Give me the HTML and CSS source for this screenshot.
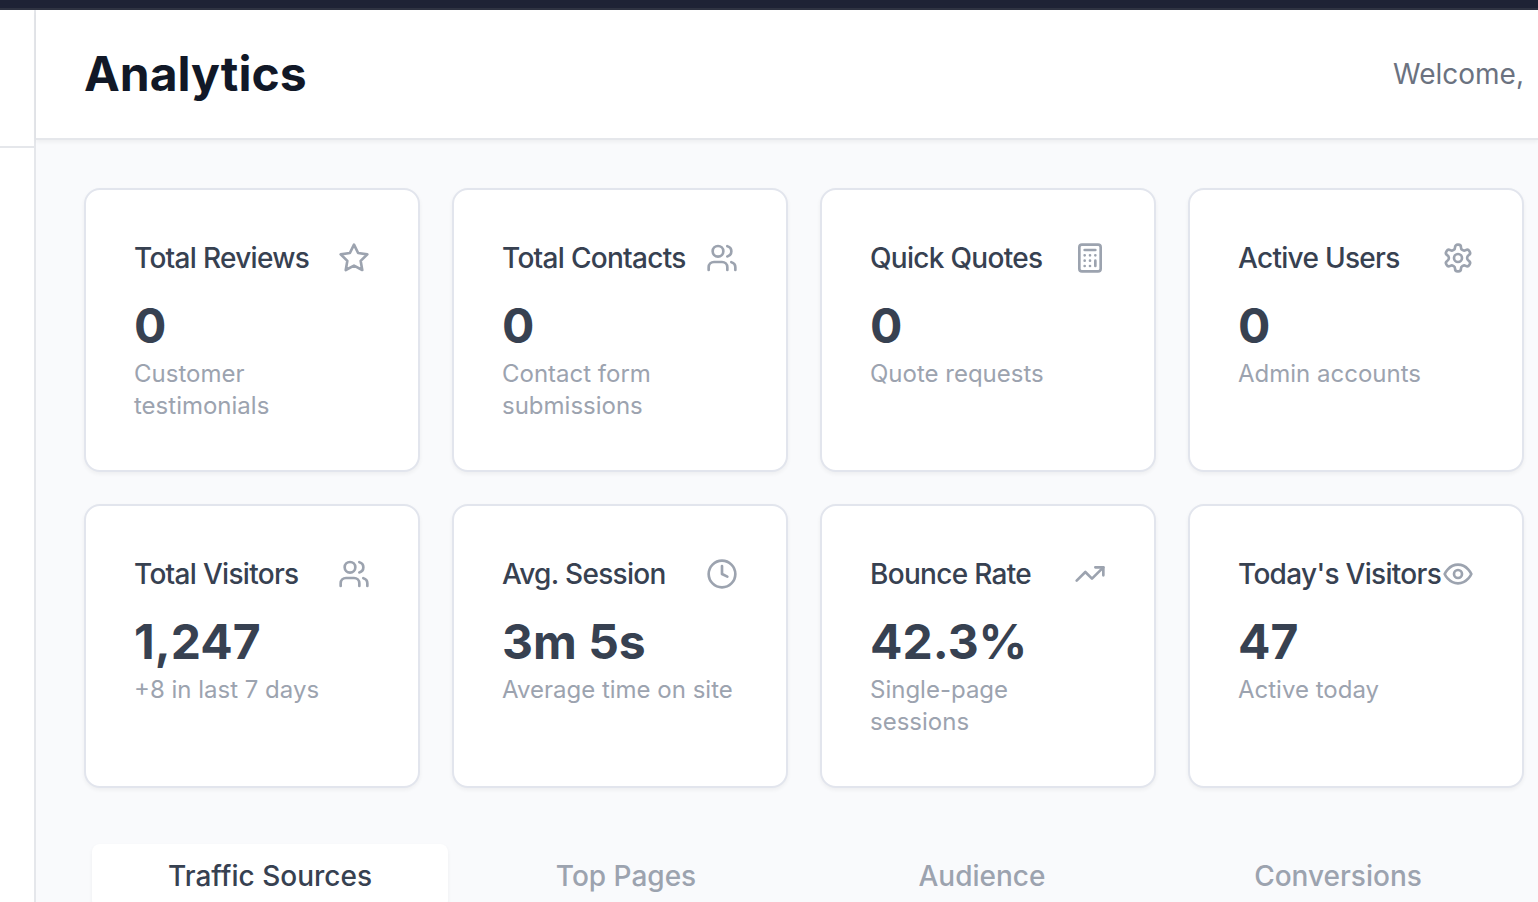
FILE: index.html
```html
<!DOCTYPE html>
<html lang="en">
<head>
<meta charset="utf-8">
<title>Analytics</title>
<link rel="stylesheet" href="styles.css">
</head>
<body>
<svg class="defs" aria-hidden="true">
<symbol id="star" viewBox="0 0 24 24"><polygon points="12 2 15.09 8.26 22 9.27 17 14.14 18.18 21.02 12 17.77 5.82 21.02 7 14.14 2 9.27 8.91 8.26 12 2"/></symbol>
<symbol id="users" viewBox="0 0 24 24"><path d="M16 21v-2a4 4 0 0 0-4-4H6a4 4 0 0 0-4 4v2"/><circle cx="9" cy="7" r="4"/><path d="M22 21v-2a4 4 0 0 0-3-3.87"/><path d="M16 3.13a4 4 0 0 1 0 7.75"/></symbol>
<symbol id="calculator" viewBox="0 0 24 24"><rect width="16" height="20" x="4" y="2" rx="2"/><path d="M8 6h8M16 14v4M16 10h.01M12 10h.01M8 10h.01M12 14h.01M8 14h.01M12 18h.01M8 18h.01"/></symbol>
<symbol id="settings" viewBox="0 0 24 24"><path d="M12.22 2h-.44a2 2 0 0 0-2 2v.18a2 2 0 0 1-1 1.73l-.43.25a2 2 0 0 1-2 0l-.15-.08a2 2 0 0 0-2.73.73l-.22.38a2 2 0 0 0 .73 2.73l.15.1a2 2 0 0 1 1 1.72v.51a2 2 0 0 1-1 1.74l-.15.09a2 2 0 0 0-.73 2.73l.22.38a2 2 0 0 0 2.73.73l.15-.08a2 2 0 0 1 2 0l.43.25a2 2 0 0 1 1 1.73V20a2 2 0 0 0 2 2h.44a2 2 0 0 0 2-2v-.18a2 2 0 0 1 1-1.73l.43-.25a2 2 0 0 1 2 0l.15.08a2 2 0 0 0 2.73-.73l.22-.39a2 2 0 0 0-.73-2.73l-.15-.08a2 2 0 0 1-1-1.74v-.5a2 2 0 0 1 1-1.74l.15-.09a2 2 0 0 0 .73-2.73l-.22-.38a2 2 0 0 0-2.73-.73l-.15.08a2 2 0 0 1-2 0l-.43-.25a2 2 0 0 1-1-1.73V4a2 2 0 0 0-2-2z"/><circle cx="12" cy="12" r="3"/></symbol>
<symbol id="clock" viewBox="0 0 24 24"><circle cx="12" cy="12" r="10"/><path d="M12 6v6l4 2"/></symbol>
<symbol id="trend" viewBox="0 0 24 24"><path d="M22 7l-8.5 8.5-5-5L2 17"/><path d="M16 7h6v6"/></symbol>
<symbol id="eye" viewBox="0 0 24 24"><path d="M2 12s3-7 10-7 10 7 10 7-3 7-10 7-10-7-10-7Z"/><circle cx="12" cy="12" r="3"/></symbol>
</svg>
<div class="topbar"></div>
<div class="shell">
<aside class="sidebar"><div class="brand"></div></aside>
<div class="content">
<header class="header"><h1>Analytics</h1><span class="welcome">Welcome,</span></header>
<main class="main">
<section class="cards">
<article class="card"><div class="head"><h2>Total Reviews</h2><svg class="icon"><use href="#star"/></svg></div><p class="value">0</p><p class="note">Customer testimonials</p></article>
<article class="card"><div class="head"><h2>Total Contacts</h2><svg class="icon"><use href="#users"/></svg></div><p class="value">0</p><p class="note">Contact form submissions</p></article>
<article class="card"><div class="head"><h2>Quick Quotes</h2><svg class="icon"><use href="#calculator"/></svg></div><p class="value">0</p><p class="note">Quote requests</p></article>
<article class="card"><div class="head"><h2>Active Users</h2><svg class="icon"><use href="#settings"/></svg></div><p class="value">0</p><p class="note">Admin accounts</p></article>
<article class="card"><div class="head"><h2>Total Visitors</h2><svg class="icon"><use href="#users"/></svg></div><p class="value">1,247</p><p class="note">+8 in last 7 days</p></article>
<article class="card"><div class="head"><h2>Avg. Session</h2><svg class="icon"><use href="#clock"/></svg></div><p class="value">3m 5s</p><p class="note">Average time on site</p></article>
<article class="card"><div class="head"><h2>Bounce Rate</h2><svg class="icon"><use href="#trend"/></svg></div><p class="value">42.3%</p><p class="note">Single-page sessions</p></article>
<article class="card"><div class="head"><h2>Today's Visitors</h2><svg class="icon"><use href="#eye"/></svg></div><p class="value">47</p><p class="note">Active today</p></article>
</section>
<div class="tabs" role="tablist">
<button class="tab active" role="tab" aria-selected="true">Traffic Sources</button>
<button class="tab" role="tab" aria-selected="false">Top Pages</button>
<button class="tab" role="tab" aria-selected="false">Audience</button>
<button class="tab" role="tab" aria-selected="false">Conversions</button>
</div>
</main>
</div>
</div>
</body>
</html>
```
FILE: styles.css
```css
* { box-sizing: border-box; }
body { margin: 0; height: 100vh; overflow: hidden; display: flex; flex-direction: column; font-family: Inter, sans-serif; color: #374151; background: #f9fafc; }
h1, h2, p { margin: 0; }
.defs { position: absolute; width: 0; height: 0; }
.topbar { flex: none; height: 10px; background: #1e2235; border-bottom: 2px solid #2f3342; }
.shell { flex: 1; min-height: 0; display: flex; }
.sidebar { flex: none; width: 36px; background: #fff; border-right: 2px solid #e5e7eb; }
.brand { height: 138px; border-bottom: 2px solid #e5e7eb; }
.content { flex: 1; min-width: 0; }
.header { display: flex; align-items: center; justify-content: space-between; padding: 32px 14px 32px 48px; background: #fff; border-bottom: 2px solid #e5e7eb; box-shadow: 0 2px 4px rgba(0, 0, 0, .05); }
h1 { font-size: 48px; line-height: 64px; font-weight: 700; color: #111827; }
.welcome { font-size: 28px; line-height: 40px; color: #6b7280; }
.main { padding: 48px 14px 0 48px; }
.cards { display: grid; grid-template-columns: repeat(4, 1fr); gap: 32px; }
.card { min-height: 284px; padding: 48px; background: #fff; border: 2px solid #e2e5ed; border-radius: 16px; box-shadow: 0 2px 4px rgba(0, 0, 0, .05); }
.head { display: flex; align-items: center; justify-content: space-between; margin-bottom: 16px; }
h2 { font-size: 28px; line-height: 40px; font-weight: 500; letter-spacing: -0.025em; white-space: nowrap; }
.icon { flex: none; width: 32px; height: 32px; fill: none; stroke: #9ca3af; stroke-width: 2; stroke-linecap: round; stroke-linejoin: round; }
.value { font-size: 48px; line-height: 64px; font-weight: 700; }
.note { font-size: 24px; line-height: 32px; color: #9ca3af; }
.tabs { display: grid; grid-template-columns: repeat(4, 1fr); margin-top: 48px; padding: 8px; }
.tab { border: 0; border-radius: 8px; padding: 12px 24px; background: none; font: 500 28px/40px Inter, sans-serif; color: #9ca3af; }
.active { background: #fff; color: #374151; box-shadow: 0 2px 4px rgba(0, 0, 0, .05); }
```
